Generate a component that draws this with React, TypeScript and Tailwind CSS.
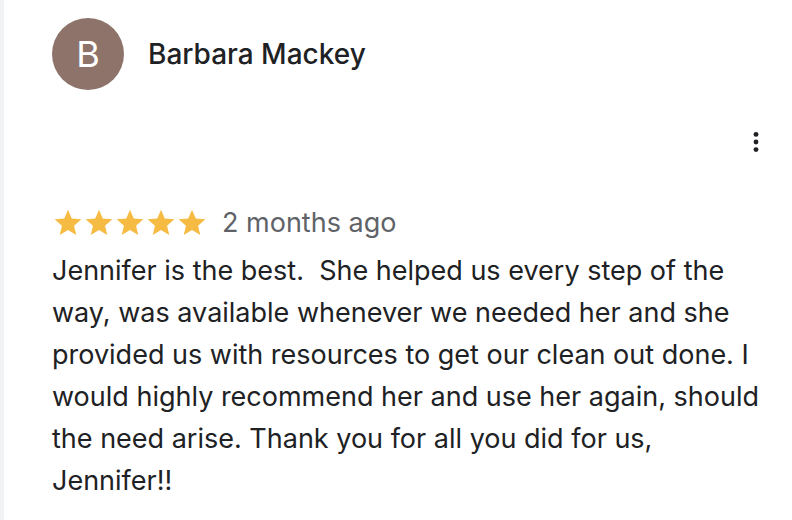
import React from "react";

const Star = () => (
  <svg viewBox="0 0 24 24" className="w-[32px] h-[32px] -mx-[0.5px]" fill="#f6bb42">
    <path d="M12 17.27L18.18 21l-1.64-7.03L22 9.24l-7.19-.61L12 2 9.19 8.63 2 9.24l5.46 4.73L5.82 21z" />
  </svg>
);

const MoreIcon = () => (
  <svg viewBox="0 0 24 24" className="w-[28px] h-[28px]" fill="#202124">
    <circle cx="12" cy="5.5" r="2.1" />
    <circle cx="12" cy="12" r="2.1" />
    <circle cx="12" cy="18.5" r="2.1" />
  </svg>
);

const lines = [
  "Jennifer is the best.  She helped us every step of the",
  "way, was available whenever we needed her and she",
  "provided us with resources to get our clean out done. I",
  "would highly recommend her and use her again, should",
  "the need arise. Thank you for all you did for us,",
  "Jennifer!!",
];

export default function App() {
  return (
    <div className="w-[792px] h-[520px] bg-white flex overflow-hidden" style={{ fontFamily: "Inter, Roboto, Arial, sans-serif" }}>
      <div className="w-[4px] bg-[#f1f3f4] shrink-0" />
      <div className="flex-1 pl-[48px] pr-[22px]">
        <div className="flex items-center gap-[24px] pt-[18px]">
          <div className="w-[72px] h-[72px] rounded-full bg-[#8d736a] flex items-center justify-center text-white text-[36px] leading-none">
            B
          </div>
          <div className="text-[28px] font-medium text-[#202124] -mt-[1px]">Barbara Mackey</div>
        </div>
        <div className="flex justify-end pt-[38px]">
          <MoreIcon />
        </div>
        <div className="flex items-center gap-[15px] mt-[47px]">
          <div className="flex items-center">
            <Star />
            <Star />
            <Star />
            <Star />
            <Star />
          </div>
          <span className="text-[27px] text-[#5f6368]">2 months ago</span>
        </div>
        <p className="mt-[6px] text-[27px] leading-[42px] text-[#202124] whitespace-pre">
          {lines.map((l, i) => (
            <span key={i} className="block">
              {l}
            </span>
          ))}
        </p>
      </div>
    </div>
  );
}
